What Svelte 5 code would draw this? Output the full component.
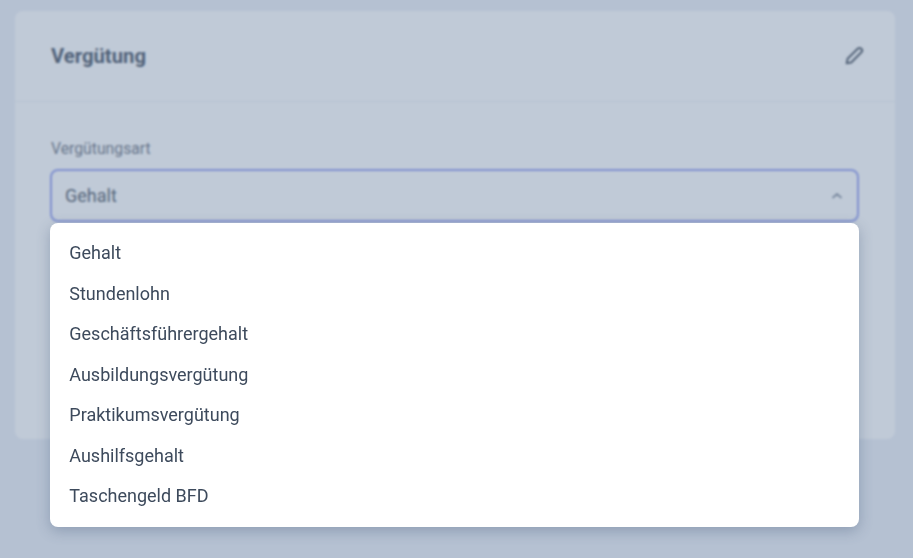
<script>
  let options = ['Gehalt', 'Stundenlohn', 'Geschäftsführergehalt', 'Ausbildungsvergütung', 'Praktikumsvergütung', 'Aushilfsgehalt', 'Taschengeld BFD'];
</script>

<style>
  :global(body) {
    margin: 0;
    font-family: Roboto, "Liberation Sans", sans-serif;
    background: #edf0f7;
    overflow: hidden;
  }

  .page {
    height: 558px;
    padding: 11px 18px 0 15px;
    box-sizing: border-box;
  }

  .card {
    height: 428px;
    background: #fff;
    border-radius: 8px;
  }

  .card-head {
    height: 90px;
    padding: 0 30px 0 36px;
    display: flex;
    align-items: center;
    justify-content: space-between;
    border-bottom: 1px solid #eef1f6;
  }

  h2 {
    margin: 0;
    font-size: 20.25px;
    font-weight: 700;
    color: #434f61;
  }

  .edit {
    width: 22px;
    height: 22px;
    color: #4b5563;
  }

  .card-body {
    padding: 37px 36px 0 35px;
  }

  label {
    display: block;
    margin: 0 0 11px 1px;
    font-size: 15.75px;
    color: #6b7280;
  }

  .select {
    height: 53px;
    padding: 0 13px;
    box-sizing: border-box;
    display: flex;
    align-items: center;
    justify-content: space-between;
    border: 2px solid #939ef2;
    border-radius: 8px;
    font-size: 18px;
    color: #4b5563;
  }

  .chevron {
    width: 14px;
    height: 14px;
    color: #8a94a3;
  }

  .overlay {
    position: absolute;
    inset: 0;
    background: rgba(102, 127, 157, 0.41);
    backdrop-filter: blur(1px);
  }

  .menu {
    position: absolute;
    left: 50px;
    top: 223px;
    width: 809px;
    margin: 0;
    padding: 10px 0;
    box-sizing: border-box;
    list-style: none;
    background: #fff;
    border-radius: 8px;
    box-shadow: 0 4px 14px rgba(60, 80, 115, 0.32);
  }

  .menu li {
    height: 40.5px;
    line-height: 40px;
    padding-left: 19.3px;
    font-size: 18px;
    color: #3d4a5c;
  }
</style>

<div class="page">
  <div class="card">
    <div class="card-head">
      <h2>Vergütung</h2>
      <svg class="edit" viewBox="0 0 24 24" fill="none" stroke="currentColor" stroke-width="2.200" stroke-linecap="round" stroke-linejoin="round">
        <path d="M4 20l1-5L16 4a2.800 2.800 0 0 1 4 4L9 19z" />
      </svg>
    </div>
    <div class="card-body">
      <label for="art">Vergütungsart</label>
      <div class="select" id="art">
        <span>Gehalt</span>
        <svg class="chevron" viewBox="0 0 14 14" fill="none" stroke="currentColor" stroke-width="1.800" stroke-linecap="round" stroke-linejoin="round">
          <path d="M3 8.500L7 5l4 3.500" />
        </svg>
      </div>
    </div>
  </div>
</div>
<div class="overlay"></div>
<ul class="menu">
  {#each options as option}
    <li>{option}</li>
  {/each}
</ul>
